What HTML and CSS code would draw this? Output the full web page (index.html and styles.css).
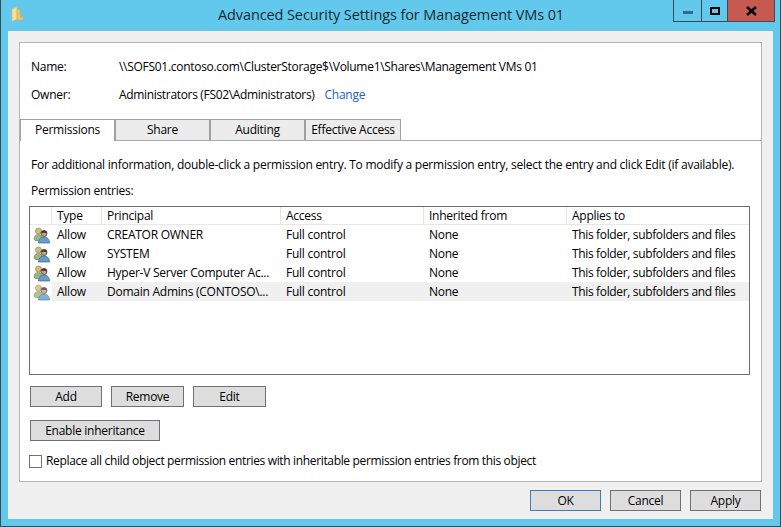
FILE: index.html
```html
<!DOCTYPE html>
<html lang="en">

<head>
    <meta charset="UTF-8">
    <title>Advanced Security Settings for Management VMs 01</title>
    <link rel="stylesheet" href="styles.css">
</head>

<body>
    <svg width="0" height="0" class="defs">
        <symbol id="users" viewBox="0 0 17 17">
            <circle cx="5.500" cy="4" r="3" fill="#d8b878" stroke="#9a8a50" stroke-width="0.7" />
            <path d="M1 12c0-3 2-4.500 4.500-4.500S9 9 9 12l-2 1.500H2z" fill="#9cb582" stroke="#6f8f55" stroke-width="0.7" />
            <circle cx="11" cy="6.500" r="3" fill="#c9a27c" stroke="#4a4038" stroke-width="0.8" />
            <path d="M11 3.500c-2 0-3 1.200-3 3 1-1 4-1 6 0 0-1.800-1-3-3-3z" fill="#3d3833" />
            <path d="M5.500 16c0-4 2.500-6 5.500-6s5.500 2 5.500 6z" fill="#6a9cc4" stroke="#2f6a9c" stroke-width="0.7" />
        </symbol>
    </svg>

    <div class="window">
        <header class="titlebar">
            <svg class="folder" width="12" height="15" viewBox="0 0 12 15">
                <path d="M1 2l3-1.500h2V12l-5 2.500z" fill="#f5df9a" stroke="#d9bd6c" stroke-width="0.6" />
                <path d="M6 2h2.500l1 8H12v3H6z" fill="#ecc766" stroke="#d2ab4b" stroke-width="0.6" />
            </svg>
            <h1 class="title">Advanced Security Settings for Management VMs 01</h1>
            <div class="controls">
                <div class="ctl ctl-min"><span class="min-bar"></span></div>
                <div class="ctl ctl-max"><span class="max-box"></span></div>
                <div class="ctl ctl-close">
                    <svg width="13" height="10" viewBox="0 0 13 10">
                        <path d="M2 1l9 8M11 1l-9 8" stroke="#000" stroke-width="2.600" fill="none" />
                    </svg>
                </div>
            </div>
        </header>

        <div class="client">
            <main class="panel">
                <div class="info">
                    <div class="info-row">
                        <span class="info-label">Name:</span>
                        <span class="path">\\SOFS01.contoso.com\ClusterStorage$\Volume1\Shares\Management VMs 01</span>
                    </div>
                    <div class="info-row">
                        <span class="info-label">Owner:</span>
                        <span class="owner">Administrators (FS02\Administrators)</span>
                        <a class="change" href="#">Change</a>
                    </div>
                </div>

                <div class="tabs">
                    <div class="tab active">Permissions</div>
                    <div class="tab">Share</div>
                    <div class="tab">Auditing</div>
                    <div class="tab tab-last">Effective Access</div>
                </div>

                <div class="tab-body">
                    <p class="hint">For additional information, double-click a permission entry. To modify a permission entry, select the entry and click Edit (if available).</p>
                    <p class="entries-label">Permission entries:</p>

                    <div class="list">
                        <div class="row head">
                            <span class="cell cell-icon"></span>
                            <span class="cell">Type</span>
                            <span class="cell">Principal</span>
                            <span class="cell">Access</span>
                            <span class="cell">Inherited from</span>
                            <span class="cell cell-end">Applies to</span>
                        </div>
                        <div class="row">
                            <span class="cell-icon"><svg width="17" height="17"><use href="#users" /></svg></span>
                            <span class="cell">Allow</span>
                            <span class="cell">CREATOR OWNER</span>
                            <span class="cell">Full control</span>
                            <span class="cell">None</span>
                            <span class="cell cell-applies">This folder, subfolders and files</span>
                        </div>
                        <div class="row">
                            <span class="cell-icon"><svg width="17" height="17"><use href="#users" /></svg></span>
                            <span class="cell">Allow</span>
                            <span class="cell">SYSTEM</span>
                            <span class="cell">Full control</span>
                            <span class="cell">None</span>
                            <span class="cell cell-applies">This folder, subfolders and files</span>
                        </div>
                        <div class="row">
                            <span class="cell-icon"><svg width="17" height="17"><use href="#users" /></svg></span>
                            <span class="cell">Allow</span>
                            <span class="cell">Hyper-V Server Computer Ac...</span>
                            <span class="cell">Full control</span>
                            <span class="cell">None</span>
                            <span class="cell cell-applies">This folder, subfolders and files</span>
                        </div>
                        <div class="row selected">
                            <span class="cell-icon"><svg width="17" height="17"><use href="#users" /></svg></span>
                            <span class="cell">Allow</span>
                            <span class="cell">Domain Admins (CONTOSO\...</span>
                            <span class="cell">Full control</span>
                            <span class="cell">None</span>
                            <span class="cell cell-applies">This folder, subfolders and files</span>
                        </div>
                    </div>

                    <div class="btn-row">
                        <button class="btn btn-add">Add</button>
                        <button class="btn">Remove</button>
                        <button class="btn">Edit</button>
                    </div>
                    <button class="btn btn-inherit">Enable inheritance</button>

                    <label class="check-row">
                        <span class="check"></span>
                        <span class="check-text">Replace all child object permission entries with inheritable permission entries from this object</span>
                    </label>
                </div>
            </main>

            <footer class="footer">
                <button class="btn btn-foot btn-default">OK</button>
                <button class="btn btn-foot">Cancel</button>
                <button class="btn btn-foot">Apply</button>
            </footer>
        </div>
    </div>
</body>

</html>
```

FILE: styles.css
```css
* {
    margin: 0;
    padding: 0;
    box-sizing: border-box;
    font-family: "Open Sans", "Noto Sans", sans-serif;
}

html,
body {
    width: 781px;
    height: 527px;
    overflow: hidden;
}

.defs {
    position: absolute;
}

.window {
    width: 781px;
    height: 527px;
    background-color: #63c9ec;
    border: 1px solid #3c4a52;
    border-top: none;
    display: flex;
    flex-direction: column;
    padding: 0 7px 7px 7px;
    font-size: 12px;
    letter-spacing: -0.25px;
    color: #000;
}

.titlebar {
    height: 31px;
    display: grid;
    grid-template-columns: 1fr auto 1fr;
    margin: 0 -1px 0 0;
    flex-shrink: 0;
}

.folder {
    margin: 7px 0 0 3px;
}

.title {
    font-size: 14.500px;
    font-weight: normal;
    letter-spacing: -0.1px;
    color: #1a2a33;
    padding-top: 5px;
    line-height: 20px;
}

.controls {
    justify-self: end;
    display: flex;
    height: 22px;
    margin-right: -1px;
    border: 1px solid #3c4a52;
    border-top: none;
}

.ctl {
    display: flex;
    align-items: center;
    justify-content: center;
    border-right: 1px solid #3c4a52;
    width: 28px;
}

.ctl-max {
    width: 26px;
}

.ctl-close {
    width: 46px;
    background-color: #c75a50;
    border-right: none;
}

.min-bar {
    width: 10px;
    height: 3px;
    margin-top: 3px;
    background-color: #2e6d85;
}

.max-box {
    width: 10px;
    height: 8px;
    border: 2px solid #000;
}

.client {
    flex: 1;
    background-color: #f0f0f0;
    padding: 11px 11px 0 11px;
    display: flex;
    flex-direction: column;
}

.panel {
    height: 440px;
    background-color: #fff;
    border: 1px solid #b5b5b5;
    display: flex;
    flex-direction: column;
}

.info {
    padding: 10px 0 0 11px;
    height: 76px;
    display: flex;
    flex-direction: column;
    gap: 1px;
}

.info-row {
    display: flex;
    height: 27px;
    align-items: center;
}

.info-label {
    width: 88px;
}

.path {
    letter-spacing: -0.29px;
}

.owner {
    letter-spacing: -0.33px;
}

.change {
    margin-left: 10px;
    color: #1a5fc8;
    text-decoration: none;
}

.tabs {
    display: flex;
    height: 22px;
    border-bottom: 1px solid #a8a8a8;
}

.tab {
    width: 95px;
    height: 21px;
    background-color: #ececec;
    border: 1px solid #a0a0a0;
    border-bottom: none;
    border-left: none;
    border-right-width: 2px;
    text-align: center;
    line-height: 19px;
}

.tab.active {
    width: 96px;
    height: 22px;
    background-color: #fff;
    border-left: 1px solid #a0a0a0;
}

.tab-last {
    border-right-width: 1px;
}

.tab-body {
    padding: 0 11px 0 9px;
    display: flex;
    flex-direction: column;
    align-items: flex-start;
}

.hint {
    margin: 15px 0 0 2px;
    line-height: 17px;
}

.entries-label {
    margin: 9px 0 0 2px;
    line-height: 17px;
}

.list {
    margin-top: 7px;
    width: 721px;
    height: 169px;
    border: 1px solid #6e6e6e;
}

.row {
    display: grid;
    grid-template-columns: 22px 50px 179px 143px 143px 1fr;
    height: 19px;
    align-items: center;
}

.head {
    height: 18px;
}

.head .cell {
    height: 18px;
    line-height: 17px;
    border-right: 1px solid #e3e3e3;
    padding-left: 5px;
    border-bottom: 1px solid #e8e8e8;
}

.head .cell-icon {
    padding: 0;
}

.head .cell-end {
    border-right: none;
}

.row .cell {
    padding-left: 5px;
    white-space: nowrap;
    overflow: hidden;
}

.row:not(.head) .cell {
    height: 19px;
    line-height: 19px;
}

.row .cell-applies {
    letter-spacing: -0.35px;
}

.cell-icon svg {
    display: block;
    margin: 1px 0 0 3px;
}

.row.selected .cell {
    background-color: #f0f0f0;
}

.row.selected .cell-icon {
    opacity: 0.8;
}

.btn {
    background-color: #dddddd;
    border: 1px solid #707070;
    font-size: 12px;
    letter-spacing: -0.25px;
    color: #000;
    height: 21px;
    width: 73px;
}

.btn-row {
    margin: 11px 0 0 1px;
    display: flex;
    gap: 9px;
}

.btn-add {
    width: 72px;
}

.btn-inherit {
    width: 130px;
    margin: 13px 0 0 1px;
}

.check-row {
    margin-top: 12px;
    display: flex;
    align-items: center;
    gap: 4px;
}

.check {
    width: 13px;
    height: 13px;
    background-color: #fff;
    border: 1px solid #707070;
}

.check-text {
    letter-spacing: -0.345px;
    line-height: 15px;
    margin-bottom: 2px;
}

.footer {
    flex: 1;
    display: flex;
    justify-content: flex-end;
    gap: 9px;
    padding: 8px 1px 0 0;
}

.btn-foot {
    width: 71px;
}

.btn-default {
    border-color: #3c7fb1;
}
```
